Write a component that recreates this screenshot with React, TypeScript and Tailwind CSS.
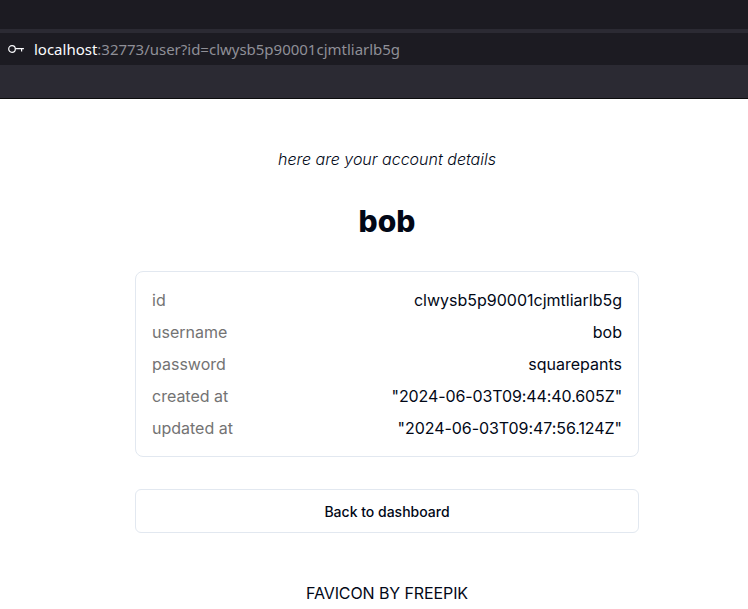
import React from "react";

const details = [
  { label: "id", value: "clwysb5p90001cjmtliarlb5g", tracking: "" },
  { label: "username", value: "bob", tracking: "" },
  { label: "password", value: "squarepants", tracking: "" },
  { label: "created at", value: '"2024-06-03T09:44:40.605Z"', tracking: "tracking-[-0.1px]" },
  { label: "updated at", value: '"2024-06-03T09:47:56.124Z"', tracking: "tracking-[-0.06px]" },
];

export default function App() {
  return (
    <div className="h-[609px] w-[748px] overflow-hidden bg-white font-['Inter',sans-serif] text-[#020817]">
      <header className="h-[99px] border-b border-[#0c0c0d] bg-[#2b2a33]">
        <div className="h-[29px] bg-[#1c1b22]" />
        <div className="mt-1 flex h-8 items-center bg-[#1c1b22]">
          <svg className="ml-2 h-4 w-4 shrink-0" viewBox="0 0 16 16" fill="none" stroke="#fbfbfe" strokeWidth="1.2">
            <circle cx="4" cy="8" r="3.3" />
            <path d="M7.3 7.6H15.9M13.6 7.6v3" />
          </svg>
          <span className="ml-2.5 font-['Noto_Sans',sans-serif] text-[15px] tracking-[-0.01px] text-[#8f8f97]">
            <span className="text-[#fbfbfe]">localhost</span>:32773/user?id=clwysb5p90001cjmtliarlb5g
          </span>
        </div>
      </header>
      <main className="ml-[135px] flex w-[504px] flex-col pt-12 text-base leading-6">
        <p className="text-center font-light italic">here are your account details</p>
        <h1 className="mt-8 text-center text-3xl leading-9 font-extrabold">bob</h1>
        <dl className="mt-8 flex h-[186px] flex-col gap-2 rounded-lg border border-[#e2e8f0] px-4 pt-4">
          {details.map(({ label, value, tracking }) => (
            <div key={label} className="flex justify-between">
              <dt className="text-[#737373]">{label}</dt>
              <dd className={tracking}>{value}</dd>
            </div>
          ))}
        </dl>
        <button className="mt-8 h-11 rounded-md border border-[#e2e8f0] pt-0.5 text-sm font-medium">Back to dashboard</button>
        <footer className="mt-12 text-center tracking-[-0.1px]">FAVICON BY FREEPIK</footer>
      </main>
    </div>
  );
}
